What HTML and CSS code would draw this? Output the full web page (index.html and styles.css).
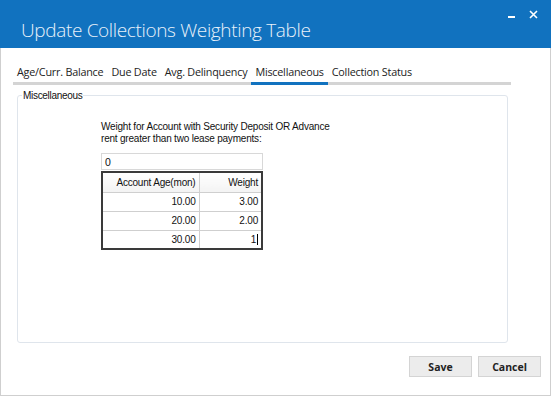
FILE: index.html
```html
<!DOCTYPE html>
<html lang="en">
<head>
    <meta charset="UTF-8">
    <meta name="viewport" content="width=device-width, initial-scale=1.0">
    <title>Update Collections Weighting Table</title>
    <link rel="stylesheet" href="styles.css">
</head>
<body>
    <div class="window">
        <div class="titlebar">
            <h1>Update Collections Weighting Table</h1>
            <div class="title-buttons">
                <span class="btn-min"></span>
                <svg class="btn-close" width="9" height="9" viewBox="0 0 9 9">
                    <path d="M1 1 L8 8 M8 1 L1 8" stroke="#fff" stroke-width="1.6"/>
                </svg>
            </div>
        </div>

        <div class="content">
            <div class="tabs">
                <span class="tab">Age/Curr. Balance</span>
                <span class="tab">Due Date</span>
                <span class="tab">Avg. Delinquency</span>
                <span class="tab active">Miscellaneous</span>
                <span class="tab">Collection Status</span>
            </div>

            <fieldset class="group">
                <legend>Miscellaneous</legend>
                <div class="form">
                    <p class="label">Weight for Account with Security Deposit OR Advance<br>rent greater than two lease payments:</p>
                    <div class="input">0</div>
                    <table class="grid">
                        <tr>
                            <th class="col-age">Account Age(mon)</th>
                            <th>Weight</th>
                        </tr>
                        <tr><td>10.00</td><td>3.00</td></tr>
                        <tr><td>20.00</td><td>2.00</td></tr>
                        <tr><td>30.00</td><td><span class="editing">1</span></td></tr>
                    </table>
                </div>
            </fieldset>

            <div class="actions">
                <button>Save</button>
                <button>Cancel</button>
            </div>
        </div>
    </div>
</body>
</html>
```

FILE: styles.css
```css
* {
    box-sizing: border-box;
}

body {
    margin: 0;
    background: #fff;
    font-family: "Liberation Sans", Arial, sans-serif;
}

.window {
    width: 551px;
    height: 396px;
    border: 1px solid #cfcfcf;
    border-top: none;
    display: flex;
    flex-direction: column;
}

.titlebar {
    height: 48px;
    background-color: #1172bf;
    display: flex;
    justify-content: space-between;
    margin: 0 -1px;
}

.titlebar h1 {
    margin: 0;
    padding: 17px 0 0 21px;
    font-family: "Open Sans", sans-serif;
    font-weight: 300;
    font-size: 19px;
    color: #e8f1fa;
    letter-spacing: -0.35px;
}

.title-buttons {
    display: flex;
    align-items: flex-start;
    gap: 14px;
    padding: 10px 13px 0 0;
}

.btn-min {
    width: 7px;
    height: 2px;
    background: #fff;
    margin-top: 6px;
}

.btn-close {
    display: block;
}

.content {
    flex: 1;
    padding: 16px 11px 0 12px;
    display: flex;
    flex-direction: column;
}

.tabs {
    display: flex;
    border-bottom: 3px solid #d4d4d4;
    margin-right: 28px;
    padding-left: 0;
}

.tab {
    font-family: "Open Sans", sans-serif;
    font-size: 10.8px;
    color: #222;
    padding: 0 4px 3px 4px;
    margin-bottom: -3px;
    border-bottom: 3px solid transparent;
    letter-spacing: -0.22px;
}

.tab.active {
    border-bottom-color: #1172bf;
}

.group {
    margin: 5px 31px 0 4px;
    height: 253px;
    border: 1px solid #dfe5ec;
    border-radius: 3px;
    padding: 0;
}

.group legend {
    font-family: "Liberation Sans", sans-serif;
    font-size: 10px;
    color: #111;
    margin-left: 4px;
    padding: 0 1px;
    letter-spacing: -0.3px;
}

.form {
    width: 162px;
    margin: 20px 0 0 83px;
}

.label {
    margin: 0 0 8px 0;
    width: 260px;
    font-size: 10px;
    line-height: 12px;
    color: #111;
    letter-spacing: -0.2px;
}

.input {
    height: 17px;
    border: 1px solid #d8d8d8;
    font-size: 10.5px;
    padding: 2px 3px;
    color: #111;
    margin-bottom: 1px;
}

.grid {
    width: 162px;
    border-collapse: collapse;
    border: 2px solid #3a3a3a;
    font-size: 10px;
    color: #111;
    letter-spacing: -0.2px;
}

.grid th,
.grid td {
    text-align: right;
    font-weight: normal;
    border: 1px solid #cfcfcf;
    height: 19px;
    padding: 0 3px;
}

.grid th {
    height: 20px;
    background: linear-gradient(#ffffff, #f3f3f3);
}

.grid .col-age {
    width: 97px;
}

.editing {
    border-right: 1px solid #000;
    padding-right: 1px;
}

.actions {
    display: flex;
    justify-content: flex-end;
    gap: 6px;
    margin-top: 13px;
    margin-right: -2px;
}

.actions button {
    width: 63px;
    height: 21px;
    background-color: #ececec;
    border: 1px solid #d4d4d4;
    font-family: "Open Sans", sans-serif;
    font-weight: bold;
    font-size: 10.5px;
    color: #222;
    padding: 0;
}
```
